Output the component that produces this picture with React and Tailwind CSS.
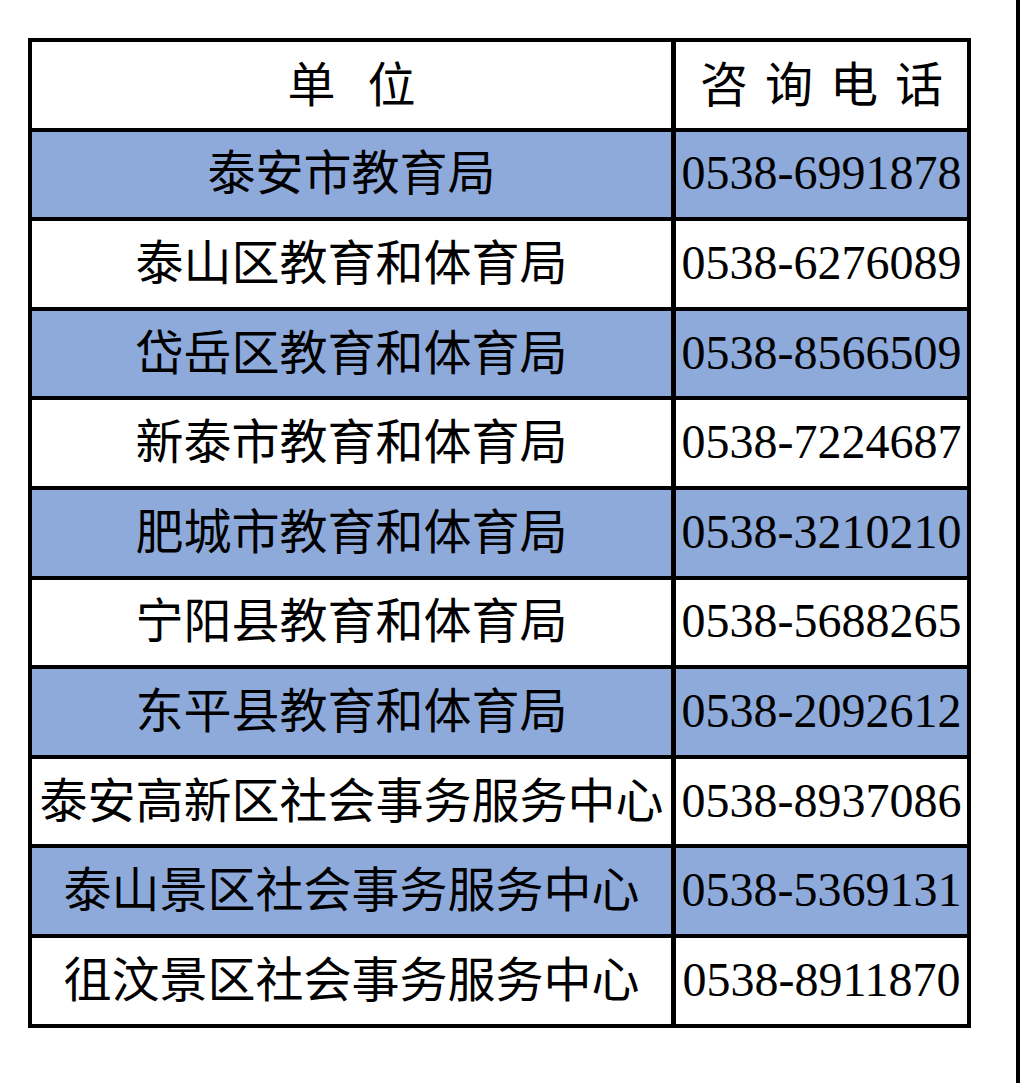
import React from "react";

const rows = [
  ["泰安市教育局", "0538-6991878", true],
  ["泰山区教育和体育局", "0538-6276089", false],
  ["岱岳区教育和体育局", "0538-8566509", true],
  ["新泰市教育和体育局", "0538-7224687", false],
  ["肥城市教育和体育局", "0538-3210210", true],
  ["宁阳县教育和体育局", "0538-5688265", false],
  ["东平县教育和体育局", "0538-2092612", true],
  ["泰安高新区社会事务服务中心", "0538-8937086", false],
  ["泰山景区社会事务服务中心", "0538-5369131", true],
  ["徂汶景区社会事务服务中心", "0538-8911870", false],
];

const cjk = { fontFamily: '"Noto Sans CJK SC", "Noto Sans", sans-serif' };
const serif = { fontFamily: '"Liberation Serif", "Times New Roman", serif' };

export default function App() {
  return (
    <div className="w-[1020px] h-[1083px] bg-white border-r-[4px] border-black pl-[28px] pt-[38px] box-border">
      <div className="w-[943px] border-[4px] border-black flex flex-col text-black">
        <div className="flex h-[85.6px]">
          <div className="w-[639px] flex items-center justify-center gap-[32px] text-[48px] leading-none pb-[8px]" style={cjk}>
            <span>单</span>
            <span>位</span>
          </div>
          <div className="w-[296px] border-l-[5px] border-black flex items-center justify-center gap-[17px] text-[48px] leading-none pb-[8px]" style={cjk}>
            <span>咨</span>
            <span>询</span>
            <span>电</span>
            <span>话</span>
          </div>
        </div>
        {rows.map(([name, phone, blue]) => (
          <div
            key={phone}
            className={
              "flex h-[89.6px] border-t-[4px] border-black " +
              (blue ? "bg-[#8eaadb]" : "bg-white")
            }
          >
            <div
              className="w-[639px] flex items-center justify-center text-[48px] leading-none whitespace-nowrap pb-[10px]"
              style={cjk}
            >
              {name}
            </div>
            <div
              className="w-[296px] border-l-[5px] border-black flex items-center justify-center text-[48px] leading-none whitespace-nowrap pb-[2px]"
              style={serif}
            >
              {phone}
            </div>
          </div>
        ))}
      </div>
    </div>
  );
}
